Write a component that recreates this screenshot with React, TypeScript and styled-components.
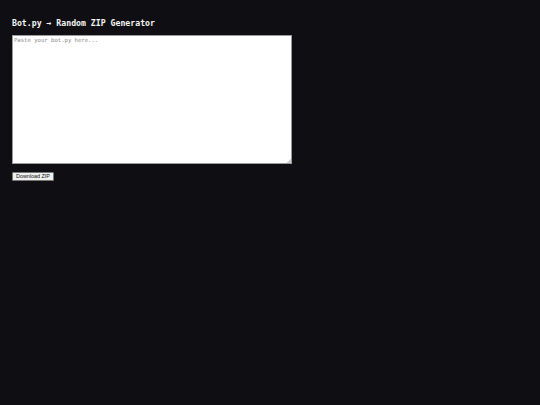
import React from "react";
import styled, { createGlobalStyle } from "styled-components";

const Global = createGlobalStyle`
  html, body { margin: 0; padding: 0; background: #0f0f13; }
  body { min-height: 405px; }
`;

const Page = styled.div`
  padding: 17px 12px;
  display: flex;
  flex-direction: column;
  align-items: flex-start;
  font-family: "DejaVu Sans Mono", monospace;
  color: #f2f2f2;
`;

const Title = styled.h1`
  margin: 0 0 6px;
  font-size: 8.2px;
  line-height: 12px;
  font-weight: bold;
  font-family: "DejaVu Sans Mono", monospace;
  color: #f4f4f4;
`;

const Editor = styled.textarea`
  box-sizing: border-box;
  width: 280px;
  height: 129px;
  margin: 0;
  padding: 1px 1px;
  border: 1px solid #9a9a9a;
  background: #ffffff;
  font-family: "DejaVu Sans Mono", monospace;
  font-size: 5.6px;
  line-height: 7px;
  color: #222;
  &::placeholder { color: #8a8a8a; }
  &::-webkit-resizer {
    background: linear-gradient(135deg, transparent 50%, #cfcfcf 50%) no-repeat right bottom / 5px 5px, #ffffff;
  }
`;

const Button = styled.button`
  margin-top: 8px;
  box-sizing: border-box;
  width: 42px;
  height: 9px;
  padding: 0;
  border: 1px solid #767676;
  border-radius: 1px;
  background: #efefef;
  color: #111;
  font-family: "Liberation Sans", Arial, sans-serif;
  font-size: 5.4px;
  line-height: 7px;
`;

export default function App() {
  return (
    <>
      <Global />
      <Page>
        <Title>Bot.py → Random ZIP Generator</Title>
        <Editor placeholder="Paste your bot.py here..." />
        <Button>Download ZIP</Button>
      </Page>
    </>
  );
}
